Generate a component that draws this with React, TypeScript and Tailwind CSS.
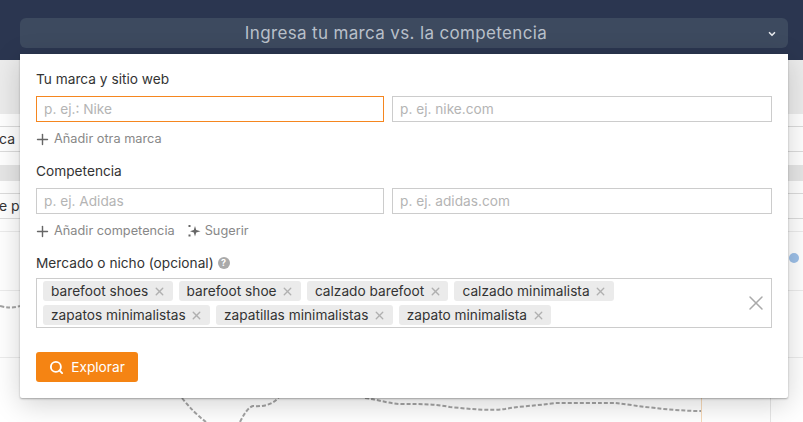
import { ChevronDown, Plus, Search, X } from "lucide-react";

const rowOne = [
  { label: "barefoot shoes" },
  { label: "barefoot shoe" },
  { label: "calzado barefoot" },
  { label: "calzado minimalista" },
];

const rowTwo = [
  { label: "zapatos minimalistas" },
  { label: "zapatillas minimalistas" },
  { label: "zapato minimalista" },
];

function Tag({ label }: { label: string }) {
  return (
    <span className="flex h-5 items-center gap-[7px] rounded-[3px] bg-[#ebebeb] pl-2 pr-[9.3px] text-[13.7px] leading-5 text-[#333]">
      {label}
      <X size={13} strokeWidth={2.5} className="-mx-[2.5px] text-[#b0b0b0]" />
    </span>
  );
}

function Field({ placeholder, focused, className }: { placeholder: string; focused?: boolean; className: string }) {
  return (
    <input
      readOnly
      placeholder={placeholder}
      className={[
        "h-[26px] min-w-0 border bg-white px-[7px] text-[13.7px] outline-none placeholder:text-[#b4b4b4]",
        focused ? "border-[#f5861f]" : "border-[#cccccc]",
        className,
      ].join(" ")}
    />
  );
}

function SparkleIcon() {
  return (
    <svg width="14" height="14" viewBox="0 0 14 14" fill="#666">
      <path d="M8 2 9.2 6 13.5 7.2 9.2 8.4 8 12.5 6.8 8.4 3 7.2 6.8 6Z" />
      <rect x="1.5" y="1" width="2" height="2" />
      <rect x="1.5" y="10.5" width="2" height="2" />
    </svg>
  );
}

function Background() {
  return (
    <div className="flex h-[422px] flex-col overflow-hidden bg-white">
      <div className="h-[60px] shrink-0 bg-[#2b3650]" />
      <div className="h-[54px] shrink-0 bg-[#ececec]" />
      <div className="mt-3 flex h-[26px] shrink-0 items-center border-y border-[#dcdcdc] text-sm text-[#333]">
        <span className="-ml-[1px]">ca</span>
      </div>
      <div className="mt-[13px] h-4 shrink-0 bg-[#e6e6e6]" />
      <div className="mt-3 flex h-[26px] shrink-0 items-center border-y border-[#dcdcdc] text-sm text-[#333]">
        <span className="-ml-[1px]">e pr</span>
      </div>
      <div className="mt-3 h-px shrink-0 bg-[#ececec]" />
      <div className="mt-[58px] h-px shrink-0 bg-[#ececec]" />
      <div className="mt-[66px] h-px shrink-0 bg-[#ececec]" />
    </div>
  );
}

export default function App() {
  return (
    <div className="relative h-[422px] w-[803px] overflow-hidden font-['Inter',sans-serif]">
      <Background />

      {/* chart bits that show around the panel */}
      <svg className="absolute inset-0" width="803" height="422" fill="none">
        <g stroke="#a3a3a3" strokeWidth="2" strokeDasharray="4 2">
          <path d="M0 306 C8 308 14 308 20 306" />
          <path d="M182 398 C190 408 198 416 206 422" />
          <path d="M240 422 C245 412 249 407 253 406 C264 407 274 404 279 397" />
          <path d="M365 398 C380 400 390 404 402 404 C420 404 435 404 450 407 C470 409 490 411 505 409 C520 406 535 406 555 403 C575 403 600 403 615 403 C640 406 670 411 702 411" />
        </g>
        <path d="M701.5 398V422" stroke="#f6d9b8" />
        <path d="M770.5 398V422" stroke="#e6e6e6" />
        <circle cx="794" cy="258" r="5" fill="#9dc0e8" />
      </svg>

      <div className="absolute left-5 top-[18px] flex h-[30px] w-[768px] items-center justify-center rounded-md bg-[#3d4a5f] pr-4 pt-[2px]">
        <span className="text-[17px] tracking-[0.35px] text-[#b9c0ca]">Ingresa tu marca vs. la competencia</span>
        <ChevronDown size={10} strokeWidth={4} className="absolute right-[11px] top-[11px] text-[#e5e7eb]" />
      </div>

      <div className="absolute left-5 top-[54px] h-[344px] w-[768px] rounded-b-[2px] bg-white px-4 pt-4 shadow-[0_1px_2px_rgba(0,0,0,0.3),0_6px_28px_rgba(0,0,0,0.18)]">
        <p className="text-[13.7px] leading-[18px] text-[#333]">Tu marca y sitio web</p>
        <div className="mt-2 flex gap-2">
          <Field placeholder="p. ej.: Nike" focused className="w-[348px] shrink-0" />
          <Field placeholder="p. ej. nike.com" className="flex-1" />
        </div>
        <div className="mt-[7px] flex h-5 items-center gap-[3.5px] text-[12.75px] text-[#888]">
          <Plus size={17} strokeWidth={2} className="-ml-[2.5px] text-[#666]" />
          Añadir otra marca
        </div>

        <p className="mt-[13px] text-[13.7px] leading-[18px] text-[#333]">Competencia</p>
        <div className="mt-2 flex gap-2">
          <Field placeholder="p. ej. Adidas" className="w-[348px] shrink-0" />
          <Field placeholder="p. ej. adidas.com" className="flex-1" />
        </div>
        <div className="mt-[7px] flex h-5 items-center text-[12.75px] text-[#888]">
          <span className="flex items-center gap-[3.5px]">
            <Plus size={17} strokeWidth={2} className="-ml-[2.5px] text-[#666]" />
            Añadir competencia
          </span>
          <span className="ml-3 flex items-center gap-1">
            <SparkleIcon />
            Sugerir
          </span>
        </div>

        <div className="mt-[13px] flex items-center gap-1 text-[13.7px] leading-[18px] text-[#333]">
          Mercado o nicho (opcional)
          <span className="flex h-3 w-3 items-center justify-center rounded-full bg-[#aaa] text-[9px] font-bold text-white">?</span>
        </div>
        <div className="relative mt-[6px] flex h-[50px] flex-col gap-1 border border-[#cccccc] pl-[6px] pt-[2px]">
          <div className="flex gap-[6px]">
            {rowOne.map((tag) => (
              <Tag key={tag.label} label={tag.label} />
            ))}
          </div>
          <div className="flex gap-[6px]">
            {rowTwo.map((tag) => (
              <Tag key={tag.label} label={tag.label} />
            ))}
          </div>
          <X size={24} strokeWidth={1.5} className="absolute right-[3px] top-3 text-[#aaa]" />
        </div>

        <button className="mt-6 flex h-[30px] w-[102px] items-center justify-center gap-2 rounded-[3px] bg-[#f58413] text-[13.7px] text-white">
          <Search size={15} strokeWidth={3} className="-mx-[0.5px]" />
          Explorar
        </button>
      </div>
    </div>
  );
}
